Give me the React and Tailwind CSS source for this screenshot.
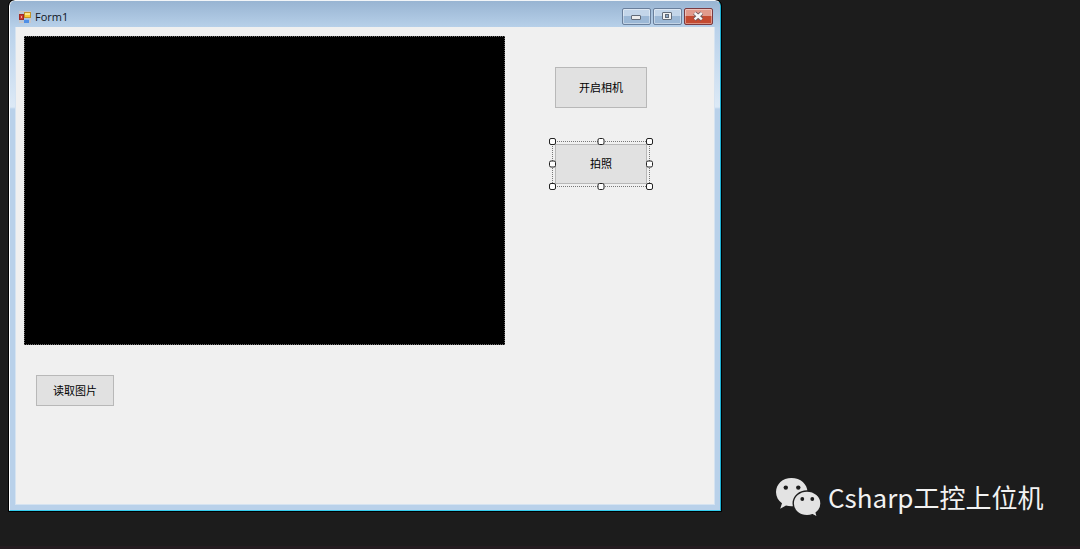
import React from 'react';

// Shared look of the WinForms push buttons
const buttonClass =
  'border border-[#b8b8b8] bg-[#e1e1e1] pb-[2px] text-[11px] leading-4 text-black flex items-center justify-center';

// Designer grab handles around the selected control
const handles = [
  '-left-1 -top-1',
  'left-1/2 -translate-x-1/2 -top-1',
  '-right-1 -top-1',
  '-left-1 top-1/2 -translate-y-1/2',
  '-right-1 top-1/2 -translate-y-1/2',
  '-left-1 -bottom-1',
  'left-1/2 -translate-x-1/2 -bottom-1',
  '-right-1 -bottom-1',
];

function FormIcon() {
  return (
    <svg width="12" height="12" viewBox="0 0 12 12" aria-hidden="true">
      <rect x="0.5" y="0.5" width="11" height="11" fill="#b9c6d6" stroke="#c9c5c6" />
      <rect x="5.5" y="1.5" width="6" height="5" fill="#f7c933" stroke="#c2922b" />
      <rect x="6" y="2" width="5" height="2" fill="#fde88a" />
      <rect x="0.5" y="3.5" width="4" height="5" fill="#c93a30" stroke="#a12a25" />
      <rect x="2" y="5" width="1" height="2" fill="#f0a49a" />
      <rect x="5" y="8" width="5" height="4" fill="#4f8fe6" />
      <rect x="5" y="8" width="5" height="1" fill="#8dbcf5" />
    </svg>
  );
}

function MinimizeIcon() {
  return (
    <svg width="11" height="11" viewBox="0 0 11 11" aria-hidden="true">
      <rect x="0.5" y="4.5" width="9" height="4" rx="0.5" fill="#ececec" stroke="#626b78" />
    </svg>
  );
}

function MaximizeIcon() {
  return (
    <svg width="11" height="11" viewBox="0 0 11 11" aria-hidden="true">
      <rect x="0.5" y="1.5" width="9" height="7" rx="0.5" fill="#f1f1f1" stroke="#626b78" />
      <rect x="3.5" y="3.5" width="3" height="3" fill="#8fa9c6" stroke="#626b78" />
    </svg>
  );
}

function CloseIcon() {
  return (
    <svg width="11" height="11" viewBox="0 0 11 11" aria-hidden="true">
      <path d="M1.6 2 L8.8 8.4 M8.8 2 L1.6 8.4" stroke="#6b5a60" strokeWidth="4.2" />
      <path d="M1.6 2 L8.8 8.4 M8.8 2 L1.6 8.4" stroke="#f5f5f5" strokeWidth="2.4" />
    </svg>
  );
}

function WeChatLogo() {
  return (
    <svg width="46" height="41" viewBox="0 0 46 41" className="shrink-0" aria-hidden="true">
      <path
        d="M16.5 1 C7.5 1 1 7.2 1 15 C1 19.7 3.3 23.6 7 26.3 L5.2 31.7 L11 28.4 C13 29 15 29.3 17.5 29.2 C26 29.2 32.5 23 32.5 15 C32.5 7.2 25.5 1 16.5 1 Z"
        fill="#e3e3e3"
      />
      <path
        d="M32 14 C24.5 14 18.2 19.4 18.2 26.4 C18.2 33.5 24.5 38.6 32 38.6 C34 38.6 35.8 38.3 37.5 37.7 L42.5 40.3 L41.2 35.8 C44.2 33.6 46 30.4 46 26.4 C46 19.4 39.5 14 32 14 Z"
        fill="#e3e3e3"
        stroke="#1c1c1c"
        strokeWidth="1.4"
      />
      <circle cx="10.8" cy="10.6" r="2.2" fill="#1c1c1c" />
      <circle cx="23.3" cy="10.6" r="2.2" fill="#1c1c1c" />
      <circle cx="27.3" cy="22" r="1.9" fill="#1c1c1c" />
      <circle cx="37.3" cy="22" r="1.9" fill="#1c1c1c" />
    </svg>
  );
}

function TitleBar() {
  const captionButton =
    'flex h-[17px] w-[29px] items-center justify-center rounded-xs border inset-shadow-[0_0_0_1px_rgba(255,255,255,0.4)]';

  return (
    <header className="flex h-[26px] items-center justify-between pl-[9px] pr-[7px] pt-[5px] bg-linear-to-b from-[#98b4d2] to-[#b7d0e9]">
      <div className="flex items-center gap-1">
        <FormIcon />
        <h1 className="font-['Open_Sans',sans-serif] text-[11px] font-medium leading-4 text-[#10151d]">Form1</h1>
      </div>
      <div className="flex gap-[2px]">
        <button
          type="button"
          aria-label="Minimize"
          className={`${captionButton} border-[#6a7f9b] bg-linear-to-b from-[#c3d5e9] from-50% to-[#9cb8d6] to-50%`}
        >
          <MinimizeIcon />
        </button>
        <button
          type="button"
          aria-label="Maximize"
          className={`${captionButton} border-[#6a7f9b] bg-linear-to-b from-[#c3d5e9] from-50% to-[#9cb8d6] to-50%`}
        >
          <MaximizeIcon />
        </button>
        <button
          type="button"
          aria-label="Close"
          className={`${captionButton} border-[#7b3a40] bg-linear-to-b from-[#e19a8c] from-50% to-[#c44a31] to-50%`}
        >
          <CloseIcon />
        </button>
      </div>
    </header>
  );
}

function FormWindow() {
  return (
    <main className="min-w-0 flex-1 overflow-hidden rounded-t-md border border-t-[#f2f5f8] border-r-[#1fb0d2] border-b-[#35cdee] border-l-white bg-[#b9d1ea] outline outline-black">
      <TitleBar />
      {/* Frame around the client area, with the glass highlight on its upper part */}
      <div className="bg-[linear-gradient(to_bottom,#b9d1ea,#dce9f6_80px,#b9d1ea_82px)] px-[5px] pb-[5px]">
        <div className="flex border border-t-0 border-[#d5e3f1] bg-[#f0f0f0] pb-[98px] pl-2 pt-[9px]">
          <section>
            <div className="h-[309px] w-[481px] border border-dotted border-[#6b6b6b] bg-black" />
            <button type="button" className={`${buttonClass} ml-3 mt-[30px] h-[31px] w-[78px]`}>
              读取图片
            </button>
          </section>
          <section className="ml-[50px] pt-[31px]">
            <button type="button" className={`${buttonClass} h-[41px] w-[92px]`}>
              开启相机
            </button>
            <div className="relative -mx-[3px] mt-[33px] border border-dotted border-[#777777] p-[2px]">
              <button type="button" className={`${buttonClass} h-10 w-[92px]`}>
                拍照
              </button>
              {handles.map((position) => (
                <span
                  key={position}
                  className={`absolute size-[7px] rounded-xs border border-[#222222] bg-white ${position}`}
                />
              ))}
            </div>
          </section>
        </div>
      </div>
    </main>
  );
}

function App() {
  return (
    <div className="flex min-h-screen items-start border-b-3 border-[#241c20] bg-[#1c1c1c] pl-[9px] font-['Noto_Sans_CJK_SC',sans-serif]">
      <FormWindow />
      <aside className="flex w-[359px] shrink-0 items-start gap-[7px] self-end pb-7 pl-[54px]">
        <WeChatLogo />
        <p className="whitespace-nowrap text-[26px] leading-10 text-[#f2f2f2]">Csharp工控上位机</p>
      </aside>
    </div>
  );
}

export default App;
